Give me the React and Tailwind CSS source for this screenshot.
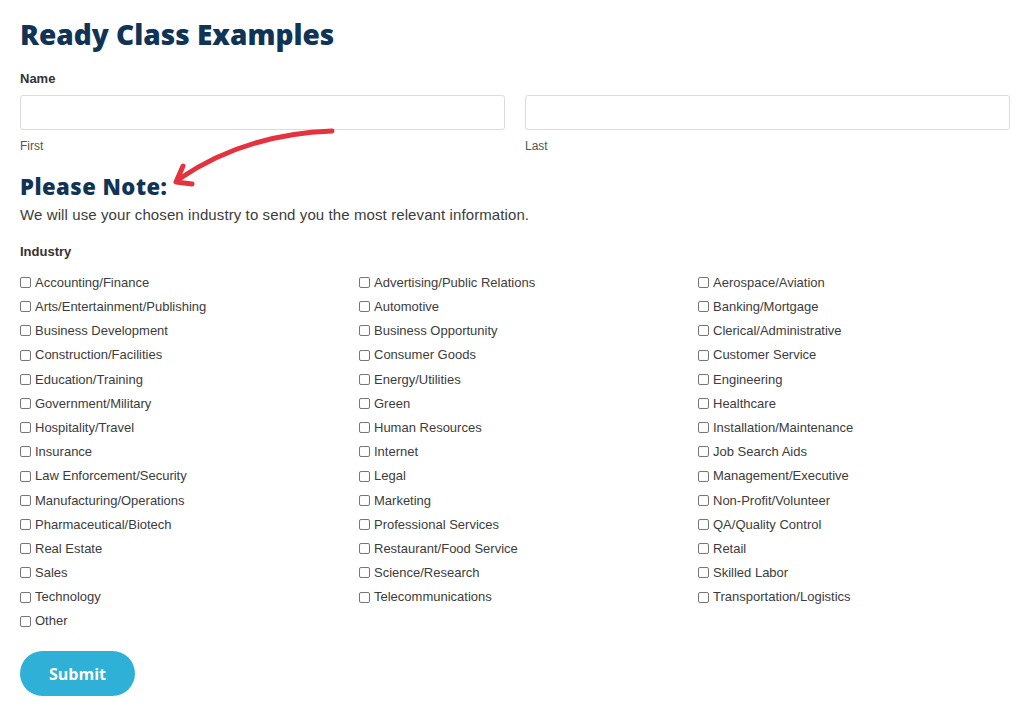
const heading = { fontFamily: '"Open Sans", "DejaVu Sans", sans-serif' };
const body = { fontFamily: '"Liberation Sans", Arial, sans-serif' };

const industries = [
  ["Accounting/Finance", "Advertising/Public Relations", "Aerospace/Aviation"],
  ["Arts/Entertainment/Publishing", "Automotive", "Banking/Mortgage"],
  ["Business Development", "Business Opportunity", "Clerical/Administrative"],
  ["Construction/Facilities", "Consumer Goods", "Customer Service"],
  ["Education/Training", "Energy/Utilities", "Engineering"],
  ["Government/Military", "Green", "Healthcare"],
  ["Hospitality/Travel", "Human Resources", "Installation/Maintenance"],
  ["Insurance", "Internet", "Job Search Aids"],
  ["Law Enforcement/Security", "Legal", "Management/Executive"],
  ["Manufacturing/Operations", "Marketing", "Non-Profit/Volunteer"],
  ["Pharmaceutical/Biotech", "Professional Services", "QA/Quality Control"],
  ["Real Estate", "Restaurant/Food Service", "Retail"],
  ["Sales", "Science/Research", "Skilled Labor"],
  ["Technology", "Telecommunications", "Transportation/Logistics"],
  ["Other"],
];

function Check({ label }) {
  return (
    <label className="flex items-center h-[24.2px] text-[13px] text-[#3c3c3c]">
      <span className="w-[11px] h-[11px] border border-[#767676] rounded-[2px] bg-white mr-[4px] shrink-0" />
      {label}
    </label>
  );
}

export default function App() {
  return (
    <div className="bg-white w-[1024px] h-[724px] overflow-hidden relative" style={body}>
      <div className="pl-5 pr-[14px] pt-[16px]">
        <h1 className="text-[28px] leading-[36px] font-extrabold text-[#0f3456]" style={heading}>
          Ready Class Examples
        </h1>

        <div className="mt-[17px] text-[13px] font-bold text-[#333]">Name</div>
        <div className="mt-[6px] flex gap-5">
          <div className="flex-1">
            <div className="h-[35px] border border-[#dcdcdc] rounded-[3px] bg-white" />
            <div className="mt-[7px] text-[12px] text-[#555]">First</div>
          </div>
          <div className="flex-1">
            <div className="h-[35px] border border-[#dcdcdc] rounded-[3px] bg-white" />
            <div className="mt-[7px] text-[12px] text-[#555]">Last</div>
          </div>
        </div>

        <h2 className="mt-[16px] text-[22px] leading-[30px] font-extrabold tracking-[0.5px] text-[#0f3456]" style={heading}>
          Please Note:
        </h2>
        <p className="mt-[3px] text-[15px] tracking-[0.1px] text-[#3c3c3c]">
          We will use your chosen industry to send you the most relevant information.
        </p>

        <div className="mt-[16px] text-[13px] font-bold text-[#333]">Industry</div>
        <div className="mt-[9px] grid grid-cols-[339px_339px_1fr]">
          {industries.flat().map((name) => (
            <Check key={name} label={name} />
          ))}
        </div>

        <button
          className="mt-[18px] w-[115px] h-[45px] rounded-full bg-[#2fb0d7] text-white text-[16px] font-bold"
          style={heading}
        >
          Submit
        </button>
      </div>

      <svg className="absolute left-0 top-0 pointer-events-none" width="1024" height="724">
        <path
          d="M332 131 Q 245 134 179 179"
          fill="none"
          stroke="#e5323f"
          strokeWidth="5"
          strokeLinecap="round"
        />
        <path
          d="M183 166 L176 182 L192 184"
          fill="none"
          stroke="#e5323f"
          strokeWidth="5"
          strokeLinecap="round"
          strokeLinejoin="round"
        />
      </svg>
    </div>
  );
}
